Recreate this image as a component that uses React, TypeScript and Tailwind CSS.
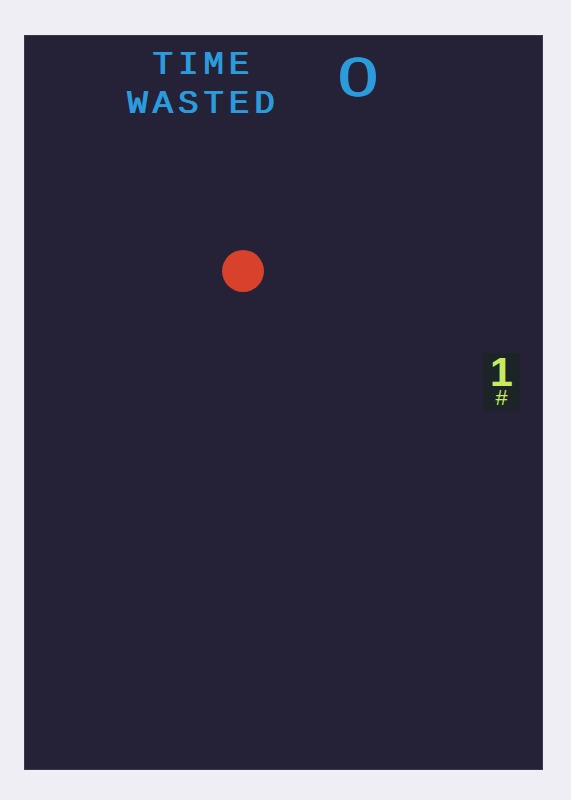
export default function App() {
  return (
    <div className="min-h-[800px] w-full bg-[#efeef5] pl-[24px] pr-[28px] pt-[35px] pb-[30px]">
      <div className="relative h-[735px] w-[519px] border border-[#3a384b] bg-[#252238]">
        {/* scoreboard */}
        <div className="flex items-start pt-[10px] pl-[96px]">
          <div
            className="w-[160px] text-center text-[34px] leading-[39px] tracking-[5px] text-[#2b9bdb] [text-shadow:0.6px_0_0_#2b9bdb,-0.6px_0_0_#2b9bdb]"
            style={{ fontFamily: '"Liberation Mono", "Courier New", monospace' }}
          >
            <div className="pl-[5px]">TIME</div>
            <div className="pl-[5px]">WASTED</div>
          </div>
          <div
            className="ml-[47px] mt-[5px] w-[60px] scale-x-[1.3] text-center text-[55px] leading-[52px] text-[#2b9bdb] [text-shadow:0.7px_0_0_#2b9bdb,-0.7px_0_0_#2b9bdb]"
            style={{ fontFamily: '"Liberation Sans", Arial, sans-serif' }}
          >
            0
          </div>
        </div>

        {/* ball */}
        <div className="absolute left-[197px] top-[214px] h-[42px] w-[42px] rounded-full bg-[#d8412b]" />

        {/* paddle counter */}
        <div className="absolute left-[458px] top-[317px] flex h-[58px] w-[37px] flex-col items-center bg-[#1d2428] text-[#c6ec5e]">
          <div
            className="mt-[3px] text-[41px] font-bold leading-[33px]"
            style={{ fontFamily: '"Liberation Sans", Arial, sans-serif' }}
          >
            1
          </div>
          <div
            className="mt-[2px] text-[22px] leading-[18px]"
            style={{ fontFamily: '"Liberation Mono", monospace' }}
          >
            #
          </div>
        </div>
      </div>
    </div>
  );
}
